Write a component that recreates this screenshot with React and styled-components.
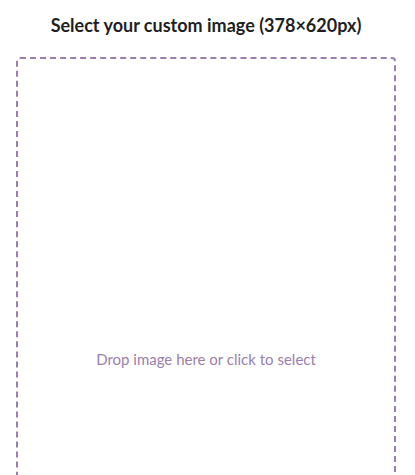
import styled, { createGlobalStyle } from 'styled-components'

const GlobalStyle = createGlobalStyle`
    html, body {
        margin: 0;
        padding: 0;
        background: #ffffff;
        font-family: Lato, "Noto Sans", sans-serif;
    }
`;

function App() {
    return (
        <>
            <GlobalStyle />
            <PageWrapper>
                <Title>Select your custom image (378×620px)</Title>
                <DropZone>
                    <DropText>Drop image here or click to select</DropText>
                </DropZone>
            </PageWrapper>
        </>
    );
}

const PageWrapper = styled.div`
    width: 415px;
    height: 475px;
    overflow: hidden;
    display: flex;
    flex-direction: column;
    padding: 0 19px 0 16px;
    box-sizing: border-box;
`;

const Title = styled.h2`
    margin: 12px 0 0;
    height: 26px;
    font-size: 18px;
    font-weight: 700;
    color: #1f1f1f;
    text-align: center;
    line-height: 26px;
`;

const DropZone = styled.div`
    margin-top: 19px;
    width: 380px;
    height: 604px;
    flex-shrink: 0;
    box-sizing: border-box;
    border: 2px dashed #9a7fab;
    border-radius: 4px;
    display: flex;
    align-items: center;
    justify-content: center;
    cursor: pointer;
`;

const DropText = styled.span`
    font-size: 15px;
    color: #9a7fab;
`;

export default App
